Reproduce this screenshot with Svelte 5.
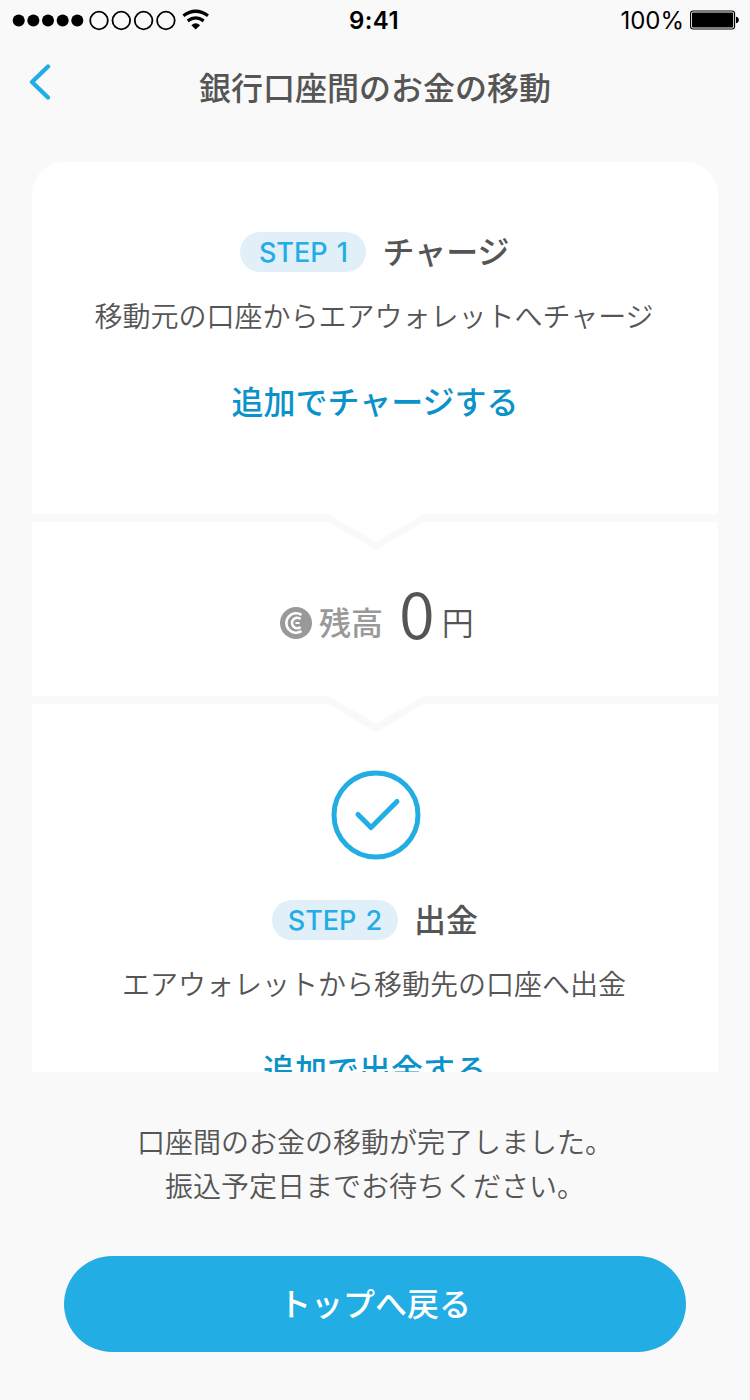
<script>
  const steps = {
    charge: {
      label: 'STEP 1',
      title: 'チャージ',
      text: '移動元の口座からエアウォレットへチャージ',
      link: '追加でチャージする'
    },
    withdraw: {
      label: 'STEP 2',
      title: '出金',
      text: 'エアウォレットから移動先の口座へ出金',
      link: '追加で出金する'
    }
  };

  const balance = 0;
  const signal = [6, 6, 6, 6, 6];
  const rings = [99, 121.3, 143.6, 165.9];
</script>

{#snippet step(s)}
  <div class="step-head">
    <span class="pill">{s.label}</span>
    <h2>{s.title}</h2>
  </div>
  <p class="step-text">{s.text}</p>
  <a class="step-link" href="#top">{s.link}</a>
{/snippet}

{#snippet divider()}
  <svg class="divider" width="686" height="36" viewBox="0 0 686 36" aria-hidden="true">
    <path d="M0 0H296.500L344 27.500L391.500 0H686V8H392.500L346 35Q344 36.400 342 35L295.500 8H0Z" />
  </svg>
{/snippet}

<div class="screen">
  <div class="status">
    <svg class="signal" width="212" height="40" viewBox="0 0 212 40" aria-hidden="true">
      {#each signal as r, i}
        <circle cx={18.7 + i * 14.65} cy="20.500" {r} />
      {/each}
      {#each rings as cx}
        <circle class="ring" {cx} cy="20.500" r="8.800" />
      {/each}
      <path class="wave" d="M183.400 15.800Q195.700 6.700 208 15.800" />
      <path class="wave" d="M187.700 20.900Q195.700 15 203.700 20.900" />
      <path d="M191.300 25.300Q195.700 21.300 200.100 25.300L195.700 29.400Z" />
    </svg>
    <span class="time">9:41</span>
    <span class="battery">
      <span class="percent">100%</span>
      <svg width="49" height="20" viewBox="0 0 49 20" aria-hidden="true">
        <rect class="case" x="0.600" y="1" width="44" height="18" rx="2.500" />
        <rect x="2" y="2.500" width="41.200" height="15" rx="1" />
        <path d="M46 6.800Q48.800 7.200 48.800 10T46 13.200Z" />
      </svg>
    </span>
  </div>

  <header>
    <a class="back" href="#top" aria-label="戻る">
      <svg width="24" height="38" viewBox="0 0 24 38">
        <path d="M20 3.500L4 19L20 34.500" />
      </svg>
    </a>
    <h1>銀行口座間のお金の移動</h1>
  </header>

  <main>
    <section class="charge">
      {@render step(steps.charge)}
    </section>

    {@render divider()}

    <section class="balance">
      <svg class="coin" width="32" height="32" viewBox="0 0 32 32" aria-hidden="true">
        <circle cx="16" cy="16" r="16" />
        <path d="M21.500 7.800A9.800 9.800 0 1 0 21.500 24.200" />
        <path d="M20.600 12A5.200 5.200 0 1 0 20.600 20" />
        <path class="core" d="M19.500 16H15.500" />
      </svg>
      <span class="balance-label">残高</span>
      <span class="amount">{balance}</span>
      <span class="unit">円</span>
    </section>

    {@render divider()}

    <section class="withdraw">
      <svg class="check" width="90" height="90" viewBox="0 0 90 90" aria-hidden="true">
        <circle cx="45" cy="45" r="42" />
        <path d="M27 44.500L40 57.500L66 31.500" />
      </svg>
      {@render step(steps.withdraw)}
    </section>
  </main>

  <footer>
    <p>口座間のお金の移動が完了しました。<br />振込予定日までお待ちください。</p>
    <button type="button">トップへ戻る</button>
  </footer>
</div>

<style>
  :global(body) {
    margin: 0;
    background: #f9f9f9;
  }

  .screen {
    display: flex;
    flex-direction: column;
    width: 750px;
    height: 1400px;
    overflow: hidden;
    background: #f9f9f9;
    color: #555;
    font-family: 'Noto Sans CJK JP', sans-serif;
    font-weight: 350;
  }

  svg {
    display: block;
    flex: none;
  }

  h1,
  h2,
  p {
    margin: 0;
  }

  .status {
    display: grid;
    grid-template-columns: 1fr auto 1fr;
    align-items: center;
    height: 40px;
    color: #000;
    font-family: Inter, sans-serif;
    font-size: 24px;
    line-height: 38px;
  }

  .ring {
    fill: none;
    stroke: #000;
    stroke-width: 1.8;
  }

  .wave {
    fill: none;
    stroke: #000;
    stroke-width: 3.2;
  }

  .time {
    padding: 2px 2px 0 0;
    font-weight: 600;
    letter-spacing: 0.4px;
  }

  .battery {
    display: flex;
    align-items: center;
    justify-content: flex-end;
    gap: 6px;
    padding-right: 11px;
    font-weight: 400;
  }

  .percent {
    padding-top: 2px;
  }

  .case {
    fill: none;
    stroke: #000;
    stroke-width: 1.1;
  }

  header {
    display: grid;
    grid-template-columns: 100px 1fr 100px;
    height: 122px;
  }

  .back {
    padding: 23px 0 0 28px;
  }

  .back path {
    fill: none;
    stroke: #23ade5;
    stroke-width: 4.4;
    stroke-linecap: round;
    stroke-linejoin: round;
  }

  h1 {
    padding-top: 22px;
    font-size: 32px;
    font-weight: 500;
    line-height: 48px;
    text-align: center;
  }

  main {
    display: flex;
    flex-direction: column;
    width: 686px;
    height: 910px;
    margin: 0 auto;
    overflow: hidden;
    border-radius: 32px 32px 0 0;
    background: #fff;
  }

  section {
    flex: none;
    box-sizing: border-box;
  }

  .charge,
  .withdraw {
    display: flex;
    flex-direction: column;
    align-items: center;
  }

  .charge {
    height: 352px;
    padding-top: 70px;
  }

  .withdraw {
    padding-top: 30px;
  }

  .divider {
    fill: #f9f9f9;
  }

  .step-head {
    display: flex;
    align-items: center;
    gap: 16px;
    height: 40px;
  }

  .pill {
    width: 126px;
    height: 40px;
    border-radius: 20px;
    background: #e1eff9;
    color: #23ade5;
    font-family: Inter, sans-serif;
    font-size: 27px;
    font-weight: 500;
    line-height: 41px;
    text-align: center;
    word-spacing: 2px;
  }

  h2 {
    padding-bottom: 4px;
    font-size: 32px;
    font-weight: 500;
    line-height: 40px;
  }

  .step-text {
    margin-top: 21px;
    padding-right: 2px;
    font-size: 28px;
    line-height: 44px;
  }

  .step-link {
    margin-top: 39px;
    color: #0a92ca;
    font-size: 32px;
    font-weight: 500;
    line-height: 48px;
    text-decoration: none;
  }

  .balance {
    display: flex;
    align-items: center;
    height: 146px;
    padding-left: 248px;
  }

  .coin {
    margin-right: 7px;
    fill: #999;
  }

  .coin path {
    fill: none;
    stroke: #fff;
    stroke-width: 2.6;
  }

  .coin .core {
    stroke-width: 2;
  }

  .balance-label {
    padding-bottom: 4px;
    color: #999;
    font-size: 32px;
    font-weight: 500;
  }

  .amount {
    margin: 0 7px 0 16px;
    padding-bottom: 25px;
    font-size: 65px;
    line-height: 80px;
  }

  .unit {
    padding-bottom: 5px;
    font-size: 32px;
  }

  .check {
    margin: 8px 0 40px 2px;
    fill: none;
    stroke: #23ade5;
    stroke-width: 5;
    stroke-linecap: round;
    stroke-linejoin: round;
  }

  footer {
    display: flex;
    flex-direction: column;
    align-items: center;
    padding-top: 47px;
  }

  footer p {
    font-size: 28px;
    line-height: 44px;
    text-align: center;
  }

  button {
    width: 622px;
    height: 96px;
    margin-top: 49px;
    padding: 0 0 4px;
    border: 0;
    border-radius: 48px;
    background: #23ade5;
    color: #fff;
    font-family: inherit;
    font-size: 32px;
    font-weight: 500;
  }
</style>
